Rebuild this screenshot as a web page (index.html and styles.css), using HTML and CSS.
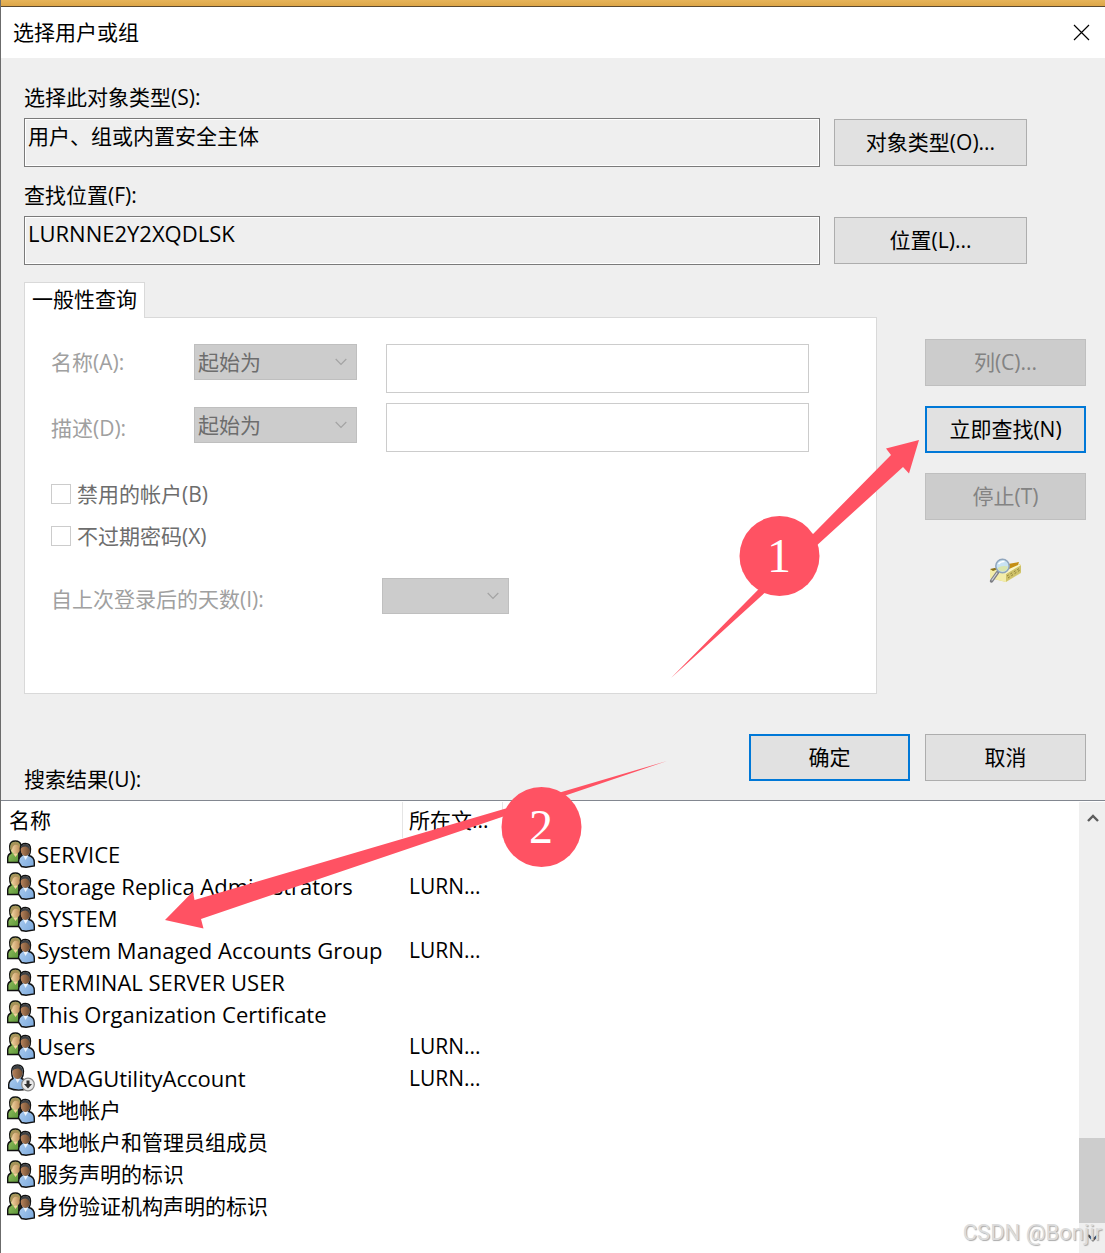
FILE: index.html
```html
<!DOCTYPE html>
<html lang="zh-CN">
<head>
<meta charset="utf-8">
<meta name="viewport" content="width=device-width, initial-scale=1">
<title>选择用户或组</title>
<link rel="stylesheet" href="styles.css">
</head>
<body>
<svg class="sprite" aria-hidden="true">
  <defs>
    <linearGradient id="skin" x1="0" y1="0" x2="1" y2="0"><stop offset="0" stop-color="#f6d9a8"/><stop offset="1" stop-color="#b98a55"/></linearGradient>
    <linearGradient id="dark" x1="0" y1="0" x2="1" y2="0"><stop offset="0" stop-color="#b8845c"/><stop offset="1" stop-color="#6b4a30"/></linearGradient>
    <linearGradient id="green" x1="0" y1="0" x2="1" y2="1"><stop offset="0" stop-color="#a5d070"/><stop offset="1" stop-color="#4f8a2c"/></linearGradient>
    <linearGradient id="blue" x1="0" y1="0" x2="1" y2="1"><stop offset="0" stop-color="#b9d6f5"/><stop offset="1" stop-color="#7aa8dc"/></linearGradient>
    <symbol id="group" viewBox="0 0 28 28">
      <path d="M.7 22.500V17.500Q1 14.500 4 13Q2.500 10 2.700 6Q3 1 8.500 1Q13 1 14 5L16 13L14 22.500Z" fill="url(#green)" stroke="#111" stroke-width="1.400"/>
      <path d="M11 12L14 6V20L11 19Z" fill="#222"/>
      <ellipse cx="8.500" cy="8.500" rx="4.600" ry="5.300" fill="url(#skin)"/>
      <path d="M3.300 9Q3 1.800 8.500 1.800Q13 2 13.300 7Q10 4 7.500 5Q5.500 6 4.800 10Z" fill="#a8935a"/>
      <path d="M6 13.500L8.500 17L11 13.500Z" fill="#f2d29b"/>
      <path d="M11.500 22Q11.500 17.500 15 15.500Q13.300 12.500 13.300 8.500Q13.500 3.500 18.500 3.500Q23.500 3.500 23.500 9Q23.500 13.500 22 15.500Q27.300 17 27.300 22.500V26L19 27.200L14.500 26.500Z" fill="url(#blue)" stroke="#111" stroke-width="1.400"/>
      <ellipse cx="18.400" cy="10" rx="4.700" ry="5.900" fill="url(#dark)"/>
      <path d="M13.700 8.500Q13.800 4 18.500 4Q23.200 4 23 11Q21.500 7 18.500 6.600Q15.500 6.500 13.700 8.500Z" fill="#3c4044"/>
      <path d="M16.500 16L18.500 20L21 16Z" fill="#ecf4fd"/>
    </symbol>
    <symbol id="user" viewBox="0 0 28 28">
      <path d="M1.700 24V20.500Q2 16.500 6 14.500Q4.500 11 4.700 7Q5 1 10.500 1Q16 1 16.500 7Q16.500 12 14.500 14.500Q20 16.500 20.500 20.500V24.500Q11 28 1.700 24Z" fill="url(#blue)" stroke="#111" stroke-width="1.400"/>
      <ellipse cx="10.500" cy="8.500" rx="5.200" ry="6.500" fill="url(#dark)"/>
      <path d="M5.200 7Q5.500 1.600 10.500 1.600Q16 2 15.600 9Q13.500 4.500 10.500 4.500Q7 4.500 5.200 7Z" fill="#3c4044"/>
      <path d="M8.500 15L10.500 19L13 15Z" fill="#ecf4fd"/>
      <circle cx="21" cy="20.500" r="6.300" fill="#e9e9e9" stroke="#8b8b8b" stroke-width="1.200"/>
      <path d="M19.500 16.500H22.500V20H25L21 24.500L17 20H19.500Z" fill="#303030"/>
    </symbol>
    <symbol id="chevron" viewBox="0 0 12 8"><path d="M.7 1L6 6.300L11.300 1" fill="none" stroke="currentColor" stroke-width="1.200"/></symbol>
  </defs>
</svg>

<main class="window">
  <header class="titlebar">
    <h1 class="title">选择用户或组</h1>
    <button class="close" type="button" aria-label="关闭"><svg width="17" height="17" viewBox="0 0 17 17"><path d="M1 1L16 16M16 1L1 16" stroke="#000" stroke-width="1.200"/></svg></button>
  </header>

  <form class="content">
    <div class="lookup">
      <label class="label" for="types">选择此对象类型(S):</label>
      <div class="lookup-row">
        <input class="readonly" id="types" value="用户、组或内置安全主体" readonly>
        <button class="btn btn-wide" type="button">对象类型(O)...</button>
      </div>
    </div>
    <div class="lookup">
      <label class="label" for="place">查找位置(F):</label>
      <div class="lookup-row">
        <input class="readonly latin" id="place" value="LURNNE2Y2XQDLSK" readonly>
        <button class="btn btn-wide" type="button">位置(L)...</button>
      </div>
    </div>

    <div class="query">
      <div class="tabs">
        <button class="tab" type="button" role="tab" aria-selected="true">一般性查询</button>
        <section class="panel">
          <div class="filters">
            <div class="filter-labels">
              <label class="muted" for="name">名称(A):</label>
              <label class="muted" for="desc">描述(D):</label>
            </div>
            <div class="filter-selects">
              <div class="dropdown"><select class="select" aria-label="名称条件" disabled><option>起始为</option></select><svg class="arrow" width="12" height="8"><use href="#chevron"/></svg></div>
              <div class="dropdown"><select class="select" aria-label="描述条件" disabled><option>起始为</option></select><svg class="arrow" width="12" height="8"><use href="#chevron"/></svg></div>
            </div>
            <div class="filter-inputs">
              <input class="textbox" id="name" disabled>
              <input class="textbox" id="desc" disabled>
            </div>
          </div>
          <div class="checks">
            <label class="check"><input class="box" type="checkbox" disabled>禁用的帐户(B)</label>
            <label class="check"><input class="box" type="checkbox" disabled>不过期密码(X)</label>
          </div>
          <div class="days">
            <label class="muted days-label" for="days">自上次登录后的天数(I):</label>
            <div class="dropdown dropdown-days"><select class="select" id="days" disabled><option></option></select><svg class="arrow" width="12" height="8"><use href="#chevron"/></svg></div>
          </div>
        </section>
      </div>
      <div class="side">
        <button class="btn" type="button" disabled>列(C)...</button>
        <button class="btn btn-default" type="button">立即查找(N)</button>
        <button class="btn" type="button" disabled>停止(T)</button>
        <svg class="search-icon" width="34" height="26" viewBox="0 0 34 26" aria-hidden="true">
          <path d="M1 12L14 9L31 6L32 8V15L17 24L1 20Z" fill="#d9cf78"/>
          <path d="M1 12L6 11L17 16V24L1 20Z" fill="#f3edaa"/>
          <path d="M17 16L32 7V14L17 23.500Z" fill="#cfc26a"/>
          <path d="M6 11L27 6L32 7L17 16Z" fill="#faf6c8"/>
          <path d="M1 11L8 9.500L9 11L4 13Z" fill="#8d7216"/>
          <path d="M19 6L30 4L29 7L20 11Z" fill="#c58e14"/>
          <path d="M18 18L31 10M19 20L31 12" stroke="#8f8238" stroke-width="1" stroke-dasharray="2 2"/>
          <path d="M8.500 14.500L2.500 23" stroke="#7c7e84" stroke-width="3.400" stroke-linecap="round"/>
          <path d="M8 15L3 22" stroke="#d3d5da" stroke-width="1.200" stroke-linecap="round"/>
          <circle cx="13.500" cy="8" r="6.700" fill="#c5e2f3" fill-opacity=".93" stroke="#8fa5bd" stroke-width="1.500"/>
          <path d="M8.500 10Q13 7 19 8.500Q18 13.500 13.500 13.500Q10 13.500 8.500 10Z" fill="#d9e5ae"/>
          <path d="M9.500 6Q12 3 15.500 3.500" stroke="#fff" stroke-width="1.600" fill="none"/>
        </svg>
      </div>
    </div>

    <div class="footer">
      <span class="label results-label" id="results-label">搜索结果(U):</span>
      <button class="btn btn-default" type="submit">确定</button>
      <button class="btn" type="button">取消</button>
    </div>
  </form>

  <section class="results">
    <table class="list" aria-labelledby="results-label">
      <thead><tr><th class="col-name" scope="col">名称</th><th class="col-folder" scope="col">所在文...</th><th class="col-rest"></th></tr></thead>
      <tbody>
        <tr><td><span class="item latin"><svg class="avatar"><use href="#group"/></svg>SERVICE</span></td><td></td><td></td></tr>
        <tr><td><span class="item latin"><svg class="avatar"><use href="#group"/></svg>Storage Replica Administrators</span></td><td>LURN...</td><td></td></tr>
        <tr><td><span class="item latin"><svg class="avatar"><use href="#group"/></svg>SYSTEM</span></td><td></td><td></td></tr>
        <tr><td><span class="item latin"><svg class="avatar"><use href="#group"/></svg>System Managed Accounts Group</span></td><td>LURN...</td><td></td></tr>
        <tr><td><span class="item latin"><svg class="avatar"><use href="#group"/></svg>TERMINAL SERVER USER</span></td><td></td><td></td></tr>
        <tr><td><span class="item latin"><svg class="avatar"><use href="#group"/></svg>This Organization Certificate</span></td><td></td><td></td></tr>
        <tr><td><span class="item latin"><svg class="avatar"><use href="#group"/></svg>Users</span></td><td>LURN...</td><td></td></tr>
        <tr><td><span class="item latin"><svg class="avatar"><use href="#user"/></svg>WDAGUtilityAccount</span></td><td>LURN...</td><td></td></tr>
        <tr><td><span class="item"><svg class="avatar"><use href="#group"/></svg>本地帐户</span></td><td></td><td></td></tr>
        <tr><td><span class="item"><svg class="avatar"><use href="#group"/></svg>本地帐户和管理员组成员</span></td><td></td><td></td></tr>
        <tr><td><span class="item"><svg class="avatar"><use href="#group"/></svg>服务声明的标识</span></td><td></td><td></td></tr>
        <tr><td><span class="item"><svg class="avatar"><use href="#group"/></svg>身份验证机构声明的标识</span></td><td></td><td></td></tr>
      </tbody>
    </table>
    <div class="scrollbar" aria-hidden="true">
      <svg class="scroll-arrow" width="12" height="10" viewBox="0 0 12 10"><path d="M1 8L6 3L11 8" fill="none" stroke="#5c5c5c" stroke-width="2.400"/></svg>
      <div class="track"></div>
      <div class="thumb"></div>
      <svg class="scroll-arrow" width="12" height="10" viewBox="0 0 12 10"><path d="M1 2L6 7L11 2" fill="none" stroke="#404040" stroke-width="2.400"/></svg>
    </div>
  </section>

  <svg class="marks" width="1105" height="1253" viewBox="0 0 1105 1253">
    <g fill="#ff5263">
      <path d="M919 440L886 448.500L891 455L671 678L903 467L909 473.500Z"/>
      <circle cx="779.500" cy="556" r="40"/>
      <path d="M165 920L193 891.500L194.500 900L667 761L201 919L203.500 928.500Z"/>
      <circle cx="541.500" cy="827" r="40"/>
    </g>
    <text class="mark-number" x="779" y="572">1</text>
    <text class="mark-number" x="541" y="843">2</text>
  </svg>
  <div class="watermark">CSDN @Bonjir</div>
</main>
</body>
</html>
```
FILE: styles.css
```css
* { box-sizing: border-box; }

body {
  margin: 0;
  background: #efefef;
  color: #000;
  font: 21px/32px "Open Sans", "Noto Sans CJK SC", sans-serif;
}

button, input, select { font: inherit; color: inherit; border-radius: 0; margin: 0; }

.latin { font-size: 22px; }

.sprite { position: absolute; width: 0; height: 0; }

.window {
  position: relative;
  display: flex;
  flex-direction: column;
  min-height: 100vh;
  overflow: hidden;
  border-left: 1px solid #6b6b6b;
}

.titlebar {
  display: flex;
  align-items: center;
  justify-content: space-between;
  height: 58px;
  padding: 7px 15px 0 12px;
  background: linear-gradient(#e6b45a 0, #dda648 6px, #5c4a30 6px, #5c4a30 7px, #fff 7px);
}

.title { margin: 0; padding-bottom: 2px; font-size: 21px; font-weight: 400; }

.close { display: flex; padding: 0; border: 0; background: none; }

.content { display: flex; flex-direction: column; padding: 24px 19px 0 23px; }

.label { display: block; line-height: 30px; }

.lookup { margin-bottom: 13px; padding-right: 59px; }

.lookup-row { display: flex; align-items: center; gap: 14px; margin-top: 6px; }

.readonly {
  flex: 1;
  min-width: 0;
  height: 49px;
  padding: 0 3px 16px;
  border: 1px solid #7a7a7a;
  box-shadow: inset 0 0 0 1px #fff;
  background: #efefef;
  outline: 0;
}

.btn {
  width: 161px;
  height: 47px;
  padding: 0 0 2px;
  border: 1px solid #adadad;
  background: #e1e1e1;
}
.btn-wide { width: 193px; }
.btn-default { border: 2px solid #0078d7; }
.btn:disabled { border-color: #bfbfbf; background: #ccc; color: #838383; }

.query { display: flex; gap: 48px; margin-top: 4px; }

.tabs { flex: 1; min-width: 0; display: flex; flex-direction: column; align-items: flex-start; }

.tab {
  position: relative;
  height: 36px;
  padding: 0 7px 3px;
  border: 1px solid #d9d9d9;
  border-bottom: 0;
  background: #fff;
}

.panel {
  align-self: stretch;
  margin-top: -1px;
  padding: 26px 67px 79px 26px;
  border: 1px solid #d9d9d9;
  background: #fff;
}

.muted { color: #a0a0a0; line-height: 36px; }

.filters { display: flex; }
.filter-labels { display: flex; flex-direction: column; gap: 30px; width: 143px; }
.filter-selects { display: flex; flex-direction: column; gap: 27px; width: 163px; margin-right: 29px; }
.filter-inputs { flex: 1; display: flex; flex-direction: column; gap: 10px; min-width: 0; }

.dropdown { display: grid; align-items: center; height: 36px; }
.dropdown > * { grid-area: 1 / 1; }
.dropdown-days { width: 127px; }

.select {
  width: 100%;
  height: 36px;
  padding: 0 3px;
  border: 1px solid #bfbfbf;
  background: #ccc;
  color: #6d6d6d;
  opacity: 1;
  appearance: none;
}

.arrow { justify-self: end; margin-right: 10px; color: #a3a3a3; pointer-events: none; }

.textbox { width: 100%; height: 49px; border: 1px solid #ccc; background: #fff; }

.checks { display: flex; flex-direction: column; align-items: flex-start; gap: 10px; margin: 26px 0; }
.check { display: flex; align-items: center; gap: 6px; color: #6d6d6d; }
.box { width: 20px; height: 20px; border: 1px solid #ccc; background: #fff; appearance: none; }

.days { display: flex; align-items: flex-end; }
.days-label { width: 331px; line-height: 30px; }

.side { display: flex; flex-direction: column; gap: 20px; width: 161px; padding-top: 57px; }
.search-icon { align-self: center; margin-top: 18px; }

.footer { display: flex; align-items: flex-start; gap: 15px; height: 66px; margin-top: 40px; }
.results-label { flex: 1; align-self: flex-end; padding-bottom: 6px; }

.results {
  flex: 1;
  display: flex;
  align-items: flex-start;
  border-top: 1px solid #828790;
  background: #fff;
  padding-left: 1px;
}

.list { flex: 1; table-layout: fixed; border-collapse: separate; border-spacing: 0; margin-top: 1px; width: 0; }
.list th { height: 36px; padding: 0 0 0 6px; font-weight: 400; text-align: left; border-right: 1px solid #e5e5e5; }
.list th.col-rest { border: 0; }
.list td { height: 32px; padding: 0 0 0 6px; white-space: nowrap; }
.list th.col-name { width: 401px; padding-left: 7px; }
.list td:first-child { padding-left: 5px; }
.col-folder { width: 100px; }

.item { display: flex; align-items: center; gap: 2px; }
.avatar { width: 28px; height: 28px; flex: none; }

.scrollbar {
  align-self: stretch;
  display: flex;
  flex-direction: column;
  align-items: center;
  width: 26px;
  margin-top: 1px;
  padding: 11px 0 10px;
  background: #efefef;
}
.scroll-arrow { margin-left: 2px; }
.track { flex: 1; }
.thumb { width: 26px; height: 85px; margin-bottom: 10px; background: #cdcdcd; }

.marks { position: absolute; top: 0; left: -1px; pointer-events: none; }
.mark-number { font: 48px "Liberation Serif", serif; fill: #fff; text-anchor: middle; }

.watermark {
  position: absolute;
  right: 3px;
  bottom: 4px;
  color: #dcdcdc;
  font: 22px/32px Roboto, sans-serif;
  text-shadow: 1px 1px 1px #aaa;
}
```
